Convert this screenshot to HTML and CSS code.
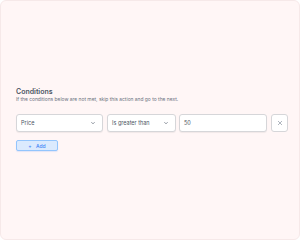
FILE: index.html
```html
<!DOCTYPE html>
<html lang="en">
<head>
  <meta charset="UTF-8">
  <title>Conditions</title>
  <link rel="stylesheet" href="styles.css">
</head>
<body>
  <div class="frame">
    <div class="section">
      <h2 class="title">Conditions</h2>
      <p class="hint">If the conditions below are not met, skip this action and go to the next.</p>

      <div class="row">
        <div class="field select field-key">
          <span>Price</span>
          <svg class="chev" viewBox="0 0 10 10"><path d="M3 4l2 2 2-2" fill="none" stroke="#6b7280" stroke-width="1"/></svg>
        </div>
        <div class="field select field-op">
          <span>Is greater than</span>
          <svg class="chev" viewBox="0 0 10 10"><path d="M3 4l2 2 2-2" fill="none" stroke="#6b7280" stroke-width="1"/></svg>
        </div>
        <div class="field field-value">
          <span>50</span>
        </div>
        <button class="remove">
          <svg viewBox="0 0 10 10"><path d="M3 3l4 4M7 3l-4 4" fill="none" stroke="#9ca3af" stroke-width="0.8"/></svg>
        </button>
      </div>

      <button class="add"><span class="plus">+</span> Add</button>
    </div>
  </div>
</body>
</html>
```

FILE: styles.css
```css
* {
  box-sizing: border-box;
}
body {
  margin: 0;
  font-family: 'Inter', 'Liberation Sans', sans-serif;
  background: #fff;
}
.frame {
  width: 300px;
  height: 240px;
  background: #fff6f6;
  border: 1px solid #f6e9e9;
  border-radius: 6px;
  display: flex;
  align-items: center;
  padding: 0 0 2px 15px;
}
.section {
  width: 273px;
}
.title {
  margin: 0;
  font-size: 7px;
  font-weight: 600;
  color: #4b5563;
  line-height: 9px;
}
.hint {
  margin: 0;
  font-size: 4.9px;
  color: #6b7280;
  line-height: 7px;
}
.row {
  display: flex;
  margin-top: 11px;
  height: 18px;
}
.field {
  height: 18px;
  background: #fff;
  border: 1px solid #d6d6d9;
  border-radius: 3px;
  box-shadow: 0 1px 1px rgba(0, 0, 0, 0.06);
  display: flex;
  align-items: center;
  padding: 0 4px;
  font-size: 5.5px;
  color: #4b5563;
}
.select {
  justify-content: space-between;
}
.chev {
  width: 8px;
  height: 8px;
  margin-right: 1px;
}
.field-key {
  width: 87px;
}
.field-op {
  width: 69px;
  margin-left: 4px;
}
.field-value {
  width: 88px;
  margin-left: 3px;
}
.remove {
  width: 17px;
  height: 18px;
  margin-left: 4px;
  padding: 0;
  background: #fff;
  border: 1px solid #d6d6d9;
  border-radius: 3px;
  display: flex;
  align-items: center;
  justify-content: center;
}
.remove svg {
  width: 10px;
  height: 10px;
}
.add {
  display: block;
  margin-top: 8px;
  width: 42px;
  height: 11px;
  padding: 0;
  background: #dbeafe;
  border: 1px solid #93c5fd;
  border-radius: 2px;
  color: #3b82f6;
  font-family: inherit;
  font-size: 5px;
  font-weight: 500;
  box-shadow: 0 1px 1px rgba(59, 130, 246, 0.15);
}
.plus {
  margin-right: 3px;
}
```
